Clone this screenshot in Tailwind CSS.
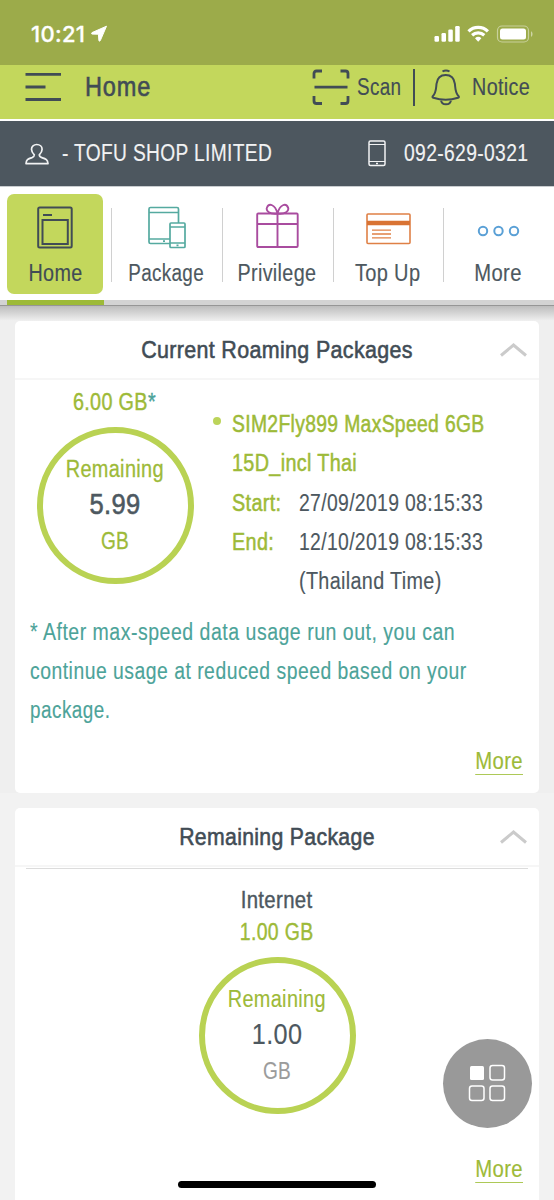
<!DOCTYPE html>
<html lang="en">
<head>
<meta charset="utf-8">
<title>Home</title>
<script src="https://cdn.jsdelivr.net/npm/@tailwindcss/browser@4"></script>
</head>
<body class="h-[1200px] w-[554px] overflow-hidden bg-[#f2f2f2] font-['Liberation_Sans',sans-serif] text-[23px] leading-none tracking-[.4px] text-[#4d5860] [-webkit-text-stroke:0.15px]">
<div class="relative flex h-[1200px] w-[554px] flex-col overflow-hidden">

<!-- Status bar -->
<div class="flex h-[65px] shrink-0 items-start bg-[#9cab4a] text-white">
  <span class="ml-[31px] mt-[23px] font-[Inter] text-[22px] font-medium leading-[22px] tracking-[0.3px] [-webkit-text-stroke:0.3px]">10:21</span>
  <svg class="ml-[6px] mt-[25px] h-[18px] w-[17px]" viewBox="0 0 17 18"><path d="M15.500 1.200 1 7.600c-.8.4-.5 1.500.1 1.500l6.300.1.500 6.300c.1.900 1 .9 1.400.1Z" fill="#fff" stroke="#fff" stroke-width="1"/></svg>
  <svg class="ml-auto mr-[20px] mt-[24px] h-[20px] w-[100px]" viewBox="0 0 100 20" fill="none">
    <g fill="#fff"><rect x=".5" y="12" width="4.500" height="5.800" rx="1.200"/><rect x="7.500" y="9" width="4.500" height="8.800" rx="1.200"/><rect x="14.300" y="5.500" width="4.500" height="12.300" rx="1.200"/><rect x="21.200" y="2" width="4.500" height="15.800" rx="1.200"/></g>
    <g stroke="#fff" stroke-width="3.200"><path d="M34.500 7.300a14 14 0 0 1 19.400 0"/><path d="M38.100 11.300a9 9 0 0 1 12.200 0"/></g>
    <path d="M41 14.200a5 5 0 0 1 6.400 0l-3.200 3.500Z" fill="#fff"/>
    <rect x="63.500" y="2" width="31" height="16" rx="4.500" stroke="#fff" stroke-opacity=".45" stroke-width="1.200"/>
    <rect x="66" y="4.500" width="26" height="11" rx="2.500" fill="#fff"/>
    <path d="M97 7.200c2 .8 2 4.800 0 5.600Z" fill="#fff" fill-opacity=".5"/>
  </svg>
</div>

<!-- Title bar -->
<div class="flex h-[56px] shrink-0 items-start border-b-2 border-white bg-[#c3d75c] text-[#414c55]">
  <svg class="ml-[25px] mt-[7px] h-[30px] w-[37px]" viewBox="0 0 37 30" stroke="#414c55" stroke-width="2.800"><path d="M.5 2.400h35.500M.5 15h20M.5 27.500h35.500"/></svg>
  <span class="ml-[23px] mt-[8px] w-[66px] origin-left scale-x-[.84] text-[28px] leading-[28px] tracking-[1px] [-webkit-text-stroke:0.6px]">Home</span>
  <svg class="ml-[161px] mt-[4px] h-[37px] w-[38px]" viewBox="0 0 38 37" fill="none" stroke="#414c55" stroke-width="2.800"><path d="M2 9.500V4.500Q2 2 4.500 2H10M28.500 2h5Q36 2 36 4.500v5M2 27v5q0 2.500 2.500 2.500H10M28.500 34.500h5q2.500 0 2.500-2.500v-5M2.500 18.200h33"/></svg>
  <span class="ml-[7px] mt-[11px] w-[46px] origin-left scale-x-[.82]">Scan</span>
  <span class="ml-[10px] mt-[4px] h-[37px] w-[2px] bg-[#414c55]"></span>
  <svg class="ml-[16px] mt-[4px] h-[38px] w-[30px]" viewBox="0 0 30 38" fill="none" stroke="#414c55" stroke-width="2"><path d="M11.500 2.500q3.500-2.200 7 0M1.800 27.200c3.500-3.700 3.100-7 3.700-12.400C6.300 8.700 10 6 14.700 6s8.400 2.700 9.200 8.800c.6 5.400.2 8.700 3.700 12.400q.8 1.100-.5 1.500-12.400 4.200-24.800 0-1.300-.4-.5-1.500ZM10 31c.5 5.800 9.500 5.800 10 0"/></svg>
  <span class="ml-[11px] mt-[11px] origin-left scale-x-[.86]">Notice</span>
</div>

<!-- Account bar -->
<div class="flex h-[66px] shrink-0 items-center border-b border-[#c9cdd0] bg-[#4d575f] text-[#f1f2f3]">
  <svg class="ml-[25px] h-[22px] w-[24px]" viewBox="0 0 24 22" fill="none" stroke="#f1f2f3" stroke-width="1.700" stroke-linejoin="round"><path d="M9.300 11.800C7.500 10 6.500 8.300 6.500 6.200c0-2.800 2.300-4.700 5.300-4.700s5.300 1.900 5.300 4.700c0 2.100-1 3.800-2.800 5.600 0 1.700.6 2.200 2.500 2.800 4.300 1.300 5.800 2.200 6.200 6H1c.3-3.800 1.700-4.700 6-6 1.800-.6 2.300-1.100 2.300-2.800Z"/></svg>
  <span class="ml-[13px] w-[210px] origin-left scale-x-[.835] whitespace-nowrap">- TOFU SHOP LIMITED</span>
  <svg class="ml-auto h-[27px] w-[18px]" viewBox="0 0 18 27" fill="none" stroke="#f1f2f3" stroke-width="1.500"><rect x="1" y="1" width="16" height="24.500" rx="1.500"/><path d="M1 4.500h16M1 21.500h16" stroke-width="1.200"/><path d="M8 23.500h2"/></svg>
  <span class="ml-[18px] mr-[25px] w-[125px] origin-left scale-x-[.84] whitespace-nowrap">092-629-0321</span>
</div>

<!-- Main navigation -->
<div class="flex h-[113px] shrink-0 bg-white">
  <div class="flex w-[111px] shrink-0 flex-col items-center pt-[7px] pr-px">
    <div class="flex h-[100px] w-[96px] flex-col items-center rounded-[7px] bg-[#c3d75c] text-[#414c55]">
      <svg class="mt-[12px] h-[43px] w-[36px]" viewBox="0 0 36 43" fill="none" stroke="#414c55" stroke-width="2"><rect x="1.200" y="1.500" width="33.500" height="40" rx="1.500"/><path d="M5.500 14h25.300v24H5.500zM6 9h9"/></svg>
      <span class="mt-[13px] scale-x-[.86]">Home</span>
    </div>
  </div>
  <div class="flex w-[111px] flex-col items-center">
      <svg class="mt-[19px] h-[43px] w-[38px]" viewBox="0 0 38 43" fill="none" stroke="#55aaa0" stroke-width="1.700"><path d="M30.500 17V3q0-1.500-1.500-1.500H2.500Q1 1.500 1 3v33q0 1.500 1.500 1.500H22M1 6.500h29.500M1 33h21"/><rect x="22" y="17" width="15" height="24.500" rx="1"/><path d="M22 21h15M22 37h15M28.500 39.300h2M15 35.200h2"/></svg>
      <span class="mt-[13px] scale-x-[.82]">Package</span>
  </div>
  <div class="flex w-[111px] flex-col items-center pr-px">
      <svg class="mt-[16px] h-[46px] w-[43px]" viewBox="0 0 43 46" fill="none" stroke="#a94c9f" stroke-width="1.900"><rect x="1.200" y="10.500" width="40.500" height="33.500" rx="1"/><path d="M1.200 21h40.500M21.500 10.500V44M21.500 10.500C14 11.500 9.500 8 11 4.500c2-4.500 8-3.500 10.500 6 2.500-9.500 8.500-10.500 10.500-6 1.500 3.500-3 7-10.500 6Z"/></svg>
      <span class="mt-[13px] scale-x-[.86]">Privilege</span>
  </div>
  <div class="flex w-[111px] flex-col items-center pr-px">
      <svg class="mt-[26px] h-[32px] w-[45px]" viewBox="0 0 45 32" fill="none" stroke="#df8046" stroke-width="1.600"><rect x="1" y="1" width="43" height="29.500" rx="1"/><path d="M1 10h43" stroke="#d97333" stroke-width="4.500"/><path d="M6 17.200h19M6 21h19M6 24.800h19" stroke-width="1.300"/></svg>
      <span class="mt-[17px] scale-x-[.87]">Top Up</span>
  </div>
  <div class="flex w-[110px] flex-col items-center pr-px">
      <svg class="mt-[38px] h-[12px] w-[43px]" viewBox="0 0 43 12" fill="none" stroke="#5aa0d6" stroke-width="2"><circle cx="6" cy="6" r="4.200"/><circle cx="21.500" cy="6" r="4.200"/><circle cx="37" cy="6" r="4.200"/></svg>
      <span class="mt-[25px] scale-x-[.88]">More</span>
  </div>
</div>
<!-- Column rules between navigation items -->
<span class="absolute left-[111px] top-[208px] h-[74px] w-px bg-[#d0d0d0]"></span>
<span class="absolute left-[222px] top-[208px] h-[74px] w-px bg-[#d0d0d0]"></span>
<span class="absolute left-[333px] top-[208px] h-[74px] w-px bg-[#d0d0d0]"></span>
<span class="absolute left-[443px] top-[208px] h-[74px] w-px bg-[#d0d0d0]"></span>
<div class="h-[5px] shrink-0 bg-[#d3d3d3] pl-[7px]"><div class="h-[5px] w-[97px] bg-[#9dba38]"></div></div>
<div class="h-[16px] shrink-0 border-t border-[#969696] bg-linear-to-b from-[#bdbdbd] to-[#f0f0f0]"></div>

<!-- Current roaming packages -->
<section class="flex h-[472px] shrink-0 flex-col bg-[#efefef] px-[15px]">
  <div class="flex h-[472px] flex-col rounded-[5px] bg-white">
    <div class="flex h-[59px] shrink-0 items-center border-b-2 border-[#f6f6f6] pl-[54px]">
      <h2 class="grow scale-x-[.875] whitespace-nowrap pt-[2px] text-center text-[24.500px] text-[#414c55] [-webkit-text-stroke:0.6px]">Current Roaming Packages</h2>
      <svg class="ml-[15px] mr-[12px] h-[15px] w-[27px]" viewBox="0 0 27 15" fill="none" stroke="#cbcbcb" stroke-width="3"><path d="M1 13.500 13.500 3 26 13.500"/></svg>
    </div>
    <div class="flex h-[233px] shrink-0">
      <div class="flex w-[198px] flex-col items-center pl-[2px] text-[#9dba38]">
        <div class="mt-[11px] h-[23px] scale-x-[.86] pr-[2px] [-webkit-text-stroke:0.4px]">6.00 GB<span class="text-[#4ca399]">*</span></div>
        <div class="mt-[13px] flex h-[157px] w-[157px] flex-col items-center rounded-full border-[6px] border-[#b9d253]">
          <span class="mt-[25px] scale-x-[.865] [-webkit-text-stroke:0.3px]">Remaining</span>
          <span class="mt-[9px] scale-x-[.88] text-[29px] text-[#4d5860] [-webkit-text-stroke:0.6px]">5.99</span>
          <span class="mt-[11px] scale-x-[.83] [-webkit-text-stroke:0.3px]">GB</span>
        </div>
      </div>
      <span class="mt-[37px] h-[8px] w-[8px] rounded-full bg-[#bcd45a]"></span>
      <div class="ml-[11px] w-[300px] pt-[25px] leading-[39.250px]">
        <p class="origin-left scale-x-[.84] whitespace-nowrap text-[#9dba38] [-webkit-text-stroke:0.5px]">SIM2Fly899 MaxSpeed 6GB</p>
        <p class="origin-left scale-x-[.86] whitespace-nowrap text-[#9dba38] [-webkit-text-stroke:0.5px]">15D_incl Thai</p>
        <div class="flex"><span class="w-[67px] origin-left scale-x-[.86] text-[#9dba38] [-webkit-text-stroke:0.5px]">Start:</span><span class="origin-left scale-x-[.842] whitespace-nowrap">27/09/2019 08:15:33</span></div>
        <div class="flex"><span class="w-[67px] origin-left scale-x-[.86] text-[#9dba38] [-webkit-text-stroke:0.5px]">End:</span><span class="origin-left scale-x-[.842] whitespace-nowrap">12/10/2019 08:15:33</span></div>
        <p class="ml-[67px] origin-left scale-x-[.86] whitespace-nowrap">(Thailand Time)</p>
      </div>
    </div>
    <p class="flex flex-col whitespace-nowrap pl-[15px] leading-[39px] tracking-[.6px] text-[#4ca399]">
      <span class="origin-left scale-x-[.848]">* After max-speed data usage run out, you can</span>
      <span class="origin-left scale-x-[.841]">continue usage at reduced speed based on your</span>
      <span class="origin-left scale-x-[.82]">package.</span>
    </p>
    <a class="mr-[16px] mt-[20px] h-[25px] origin-right scale-x-[.885] self-end border-b border-[#adc957] text-[#9dba38]">More</a>
  </div>
</section>

<!-- Remaining package -->
<section class="mt-[15px] flex h-[392px] shrink-0 flex-col px-[15px]">
  <div class="flex h-[400px] shrink-0 flex-col rounded-t-[5px] bg-white">
    <div class="flex h-[59px] shrink-0 items-center border-b-2 border-[#f6f6f6] pl-[54px]">
      <h2 class="grow scale-x-[.865] whitespace-nowrap pt-[2px] text-center text-[24.500px] text-[#414c55] [-webkit-text-stroke:0.6px]">Remaining Package</h2>
      <svg class="ml-[15px] mr-[12px] h-[15px] w-[27px]" viewBox="0 0 27 15" fill="none" stroke="#cbcbcb" stroke-width="3"><path d="M1 13.500 13.500 3 26 13.500"/></svg>
    </div>
    <div class="mx-[11px] mt-px h-px shrink-0 bg-[#dcdcdc]"></div>
    <div class="flex flex-col items-center text-[#9dba38]">
      <span class="mt-[20px] scale-x-[.885] text-[#4d5860] [-webkit-text-stroke:0.4px]">Internet</span>
      <span class="mt-[9px] scale-x-[.845] [-webkit-text-stroke:0.4px]">1.00 GB</span>
      <div class="mt-[13px] flex h-[157px] w-[157px] flex-col items-center rounded-full border-[6px] border-[#b9d253]">
        <span class="mt-[25px] scale-x-[.865]">Remaining</span>
        <span class="mt-[9px] scale-x-[.87] text-[29px] text-[#4d5860]">1.00</span>
        <span class="mt-[11px] scale-x-[.83] text-[#9b9b9b]">GB</span>
      </div>
    </div>
    <a class="mr-[16px] mt-[44px] h-[25px] origin-right scale-x-[.885] self-end border-b border-[#adc957] text-[#9dba38]">More</a>
  </div>
</section>

<!-- Floating menu button -->
<div class="absolute left-[443px] top-[1039px] flex h-[89px] w-[89px] items-center justify-center rounded-full bg-[#999] pb-[2px] pr-[2px]">
  <svg class="h-[38px] w-[38px]" viewBox="0 0 38 38" fill="none" stroke="#fff" stroke-width="1.500"><rect x="2" y="2" width="14" height="14" rx="1.500" fill="#fff" stroke="none"/><rect x="22" y="1.500" width="14.500" height="14.500" rx="2.500"/><rect x="1.500" y="22" width="14.500" height="14.500" rx="2.500"/><rect x="22" y="22" width="14.500" height="14.500" rx="2.500"/></svg>
</div>
<div class="absolute left-[178px] top-[1181px] h-[7px] w-[198px] rounded-full bg-black"></div>
</div>
</body>
</html>
